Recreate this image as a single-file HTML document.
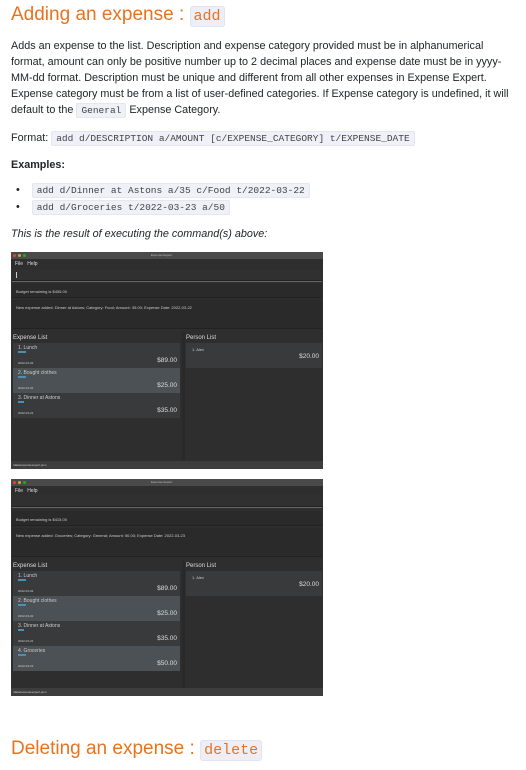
<!DOCTYPE html>
<html><head><meta charset="utf-8"><style>
*{margin:0;padding:0;box-sizing:border-box}
body{width:526px;height:770px;background:#fff;font-family:"Liberation Sans",sans-serif;color:#212529;position:relative;overflow:hidden}
h2{position:absolute;left:11px;font-weight:normal;font-size:19px;color:#e8731f;white-space:nowrap}
.hc{font-family:"Liberation Mono",monospace;background:#eeeef8;border:1px solid #e4e4f0;border-radius:3px;padding:1px 3px;font-size:15px;color:#e8731f}
code{font-family:"Liberation Mono",monospace;font-size:9.5px;background:#f0f0f8;border:1px solid #e6e6f0;border-radius:2px;padding:1px 4px;color:#444}
p{position:absolute;left:11px;font-size:10.8px;line-height:16px;white-space:nowrap}
.app{position:absolute;left:11px;width:312px;background:#2e2e2e;overflow:hidden;font-size:4px;color:#ccc}
.app div{position:absolute;white-space:nowrap}
.tb{left:0;top:0;width:312px;height:7px;background:#4a4a4a}
.dot{top:2px;width:3px;height:3px;border-radius:50%}
.box{left:1px;width:310px;background:#2a2a2a;border-bottom:1px solid #222}
.it{left:2px;width:167px;height:25px;background:#383a3c}
.it.s{background:#4b5154}
.tag{left:5px;top:8px;width:8px;height:2px;background:#4b8fb4}
.amt{right:3px;top:14px;font-size:6.5px;color:#ddd}
</style></head><body>
<h2 style="top:4px">Adding an expense : <span class="hc">add</span></h2>
<p style="top:38px">Adds an expense to the list. Description and expense category provided must be in alphanumerical<br>format, amount can only be positive number up to 2 decimal places and expense date must be in yyyy-<br>MM-dd format. Description must be unique and different from all other expenses in Expense Expert.<br>Expense category must be from a list of user-defined categories. If Expense category is undefined, it will<br>default to the <code>General</code> Expense Category.</p>
<p style="top:130px">Format: <code>add d/DESCRIPTION a/AMOUNT [c/EXPENSE_CATEGORY] t/EXPENSE_DATE</code></p>
<p style="top:157px;font-weight:bold">Examples:</p>
<p style="top:182px;left:16px">•&nbsp;&nbsp;&nbsp;&nbsp;<code>add d/Dinner at Astons a/35 c/Food t/2022-03-22</code></p>
<p style="top:199px;left:16px">•&nbsp;&nbsp;&nbsp;&nbsp;<code>add d/Groceries t/2022-03-23 a/50</code></p>
<p style="top:226px;font-style:italic">This is the result of executing the command(s) above:</p>

<div class="app" style="top:252px;height:217px">
 <div class="tb"></div>
 <div class="dot" style="left:2px;background:#e0443e"></div><div class="dot" style="left:7px;background:#dea123"></div><div class="dot" style="left:12px;background:#1aab29"></div>
 <div style="left:140px;top:1px;font-size:3px;color:#bbb">Expense Expert</div>
 <div style="left:4px;top:9px;font-size:5px;color:#ddd">File&nbsp;&nbsp;&nbsp;Help</div>
 <div class="box" style="top:17px;height:12px;background:#303030"></div>
 <div style="left:5px;top:20px;width:1px;height:6px;background:#ccc"></div>
 <div style="left:1px;top:29px;width:310px;height:1px;background:#666"></div>
 <div class="box" style="top:32px;height:14px"></div>
 <div style="left:5px;top:37px">Budget remaining is $455.00</div>
 <div class="box" style="top:48px;height:29px"></div>
 <div style="left:5px;top:53px">New expense added: Dinner at Astons; Category: Food; Amount: 35.00; Expense Date: 2022-03-22</div>
 <div style="left:171px;top:80px;width:3px;height:129px;background:#292929"></div>
 <div style="left:2px;top:83px;font-size:6px;color:#ddd">Expense List</div>
 <div style="left:175px;top:83px;font-size:6px;color:#ddd">Person List</div>
 <div class="it" style="top:91px"><div style="left:5px;top:2px;font-size:5px">1. Lunch</div><div class="tag"></div><div style="left:5px;top:18px;font-size:3px">2022-03-02</div><div class="amt">$89.00</div></div>
 <div class="it s" style="top:116px"><div style="left:5px;top:2px;font-size:5px">2. Bought clothes</div><div class="tag"></div><div style="left:5px;top:18px;font-size:3px">2022-03-02</div><div class="amt">$25.00</div></div>
 <div class="it" style="top:141px"><div style="left:5px;top:2px;font-size:5px">3. Dinner at Astons</div><div class="tag" style="width:6px"></div><div style="left:5px;top:18px;font-size:3px">2022-03-22</div><div class="amt">$35.00</div></div>
 <div style="left:175px;top:91px;width:136px;height:25px;background:#383a3c"><div style="left:6px;top:4px">1. Alex</div><div style="right:3px;top:10px;font-size:6.5px;color:#ddd">$20.00</div></div>
 <div style="left:0;top:209px;width:312px;height:8px;background:#3d3d3d;font-size:3px;padding:2px">/data/expenseexpert.json</div>
</div>

<div class="app" style="top:479px;height:217px">
 <div class="tb"></div>
 <div class="dot" style="left:2px;background:#e0443e"></div><div class="dot" style="left:7px;background:#dea123"></div><div class="dot" style="left:12px;background:#1aab29"></div>
 <div style="left:140px;top:1px;font-size:3px;color:#bbb">Expense Expert</div>
 <div style="left:4px;top:9px;font-size:5px;color:#ddd">File&nbsp;&nbsp;&nbsp;Help</div>
 <div class="box" style="top:16px;height:12px;background:#303030"></div>
 <div style="left:1px;top:28px;width:310px;height:1px;background:#666"></div>
 <div class="box" style="top:32px;height:15px"></div>
 <div style="left:5px;top:38px">Budget remaining is $415.00</div>
 <div class="box" style="top:49px;height:29px"></div>
 <div style="left:5px;top:54px">New expense added: Groceries; Category: General; Amount: 50.00; Expense Date: 2022-03-23</div>
 <div style="left:171px;top:82px;width:3px;height:127px;background:#292929"></div>
 <div style="left:2px;top:84px;font-size:6px;color:#ddd">Expense List</div>
 <div style="left:175px;top:84px;font-size:6px;color:#ddd">Person List</div>
 <div class="it" style="top:92px"><div style="left:5px;top:2px;font-size:5px">1. Lunch</div><div class="tag"></div><div style="left:5px;top:18px;font-size:3px">2022-03-02</div><div class="amt">$89.00</div></div>
 <div class="it s" style="top:117px"><div style="left:5px;top:2px;font-size:5px">2. Bought clothes</div><div class="tag"></div><div style="left:5px;top:18px;font-size:3px">2022-03-02</div><div class="amt">$25.00</div></div>
 <div class="it" style="top:142px"><div style="left:5px;top:2px;font-size:5px">3. Dinner at Astons</div><div class="tag" style="width:6px"></div><div style="left:5px;top:18px;font-size:3px">2022-03-22</div><div class="amt">$35.00</div></div>
 <div class="it s" style="top:167px"><div style="left:5px;top:2px;font-size:5px">4. Groceries</div><div class="tag"></div><div style="left:5px;top:18px;font-size:3px">2022-03-23</div><div class="amt">$50.00</div></div>
 <div style="left:175px;top:92px;width:136px;height:25px;background:#383a3c"><div style="left:6px;top:4px">1. Alex</div><div style="right:3px;top:10px;font-size:6.5px;color:#ddd">$20.00</div></div>
 <div style="left:0;top:209px;width:312px;height:8px;background:#3d3d3d;font-size:3px;padding:2px">/data/expenseexpert.json</div>
</div>

<h2 style="top:738px">Deleting an expense : <span class="hc">delete</span></h2>
</body></html>
